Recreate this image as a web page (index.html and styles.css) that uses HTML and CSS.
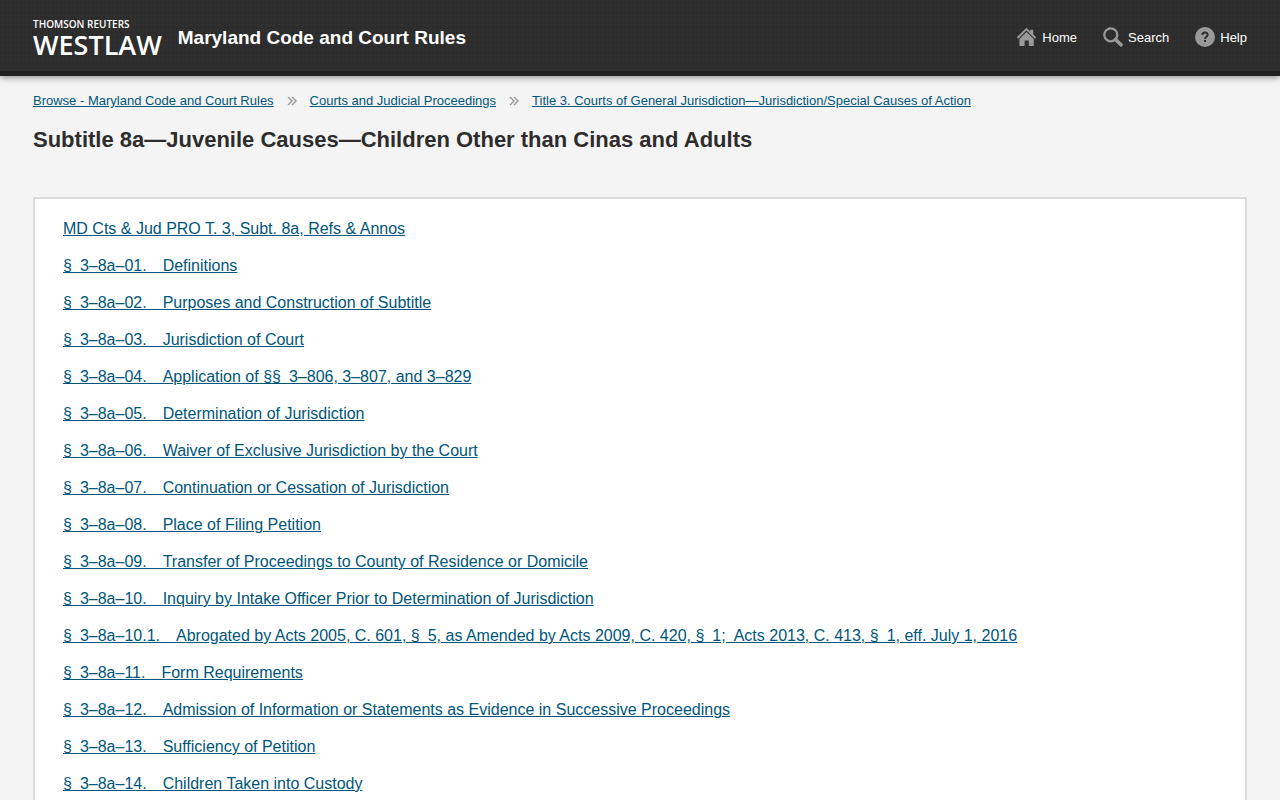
FILE: index.html
```html
<!DOCTYPE html>
<html lang="en">
<head>
    <meta charset="UTF-8">
    <meta name="viewport" content="width=device-width, initial-scale=1.0">
    <title>Maryland Code and Court Rules</title>
    <link rel="stylesheet" href="styles.css">
</head>
<body>
    <header class="header">
        <a class="logo" href="#">
            <span class="logo-company">THOMSON REUTERS</span>
            <span class="logo-product">WESTLAW</span>
        </a>
        <div class="site-title">Maryland Code and Court Rules</div>
        <nav class="tools">
            <a href="#">
                <svg width="20" height="20" viewBox="0 0 20 20" fill="#999">
                    <path d="M9.5 0.8 L13.3 4.4 V2.8 H16.2 V7.2 L19.2 10.3 L17.8 11.7 L9.5 3.6 L1.2 11.7 L-0.2 10.3 Z"/>
                    <path d="M9.5 4.9 L16.8 12 V19 H11.8 V13.5 H7.6 V19 H2.4 V12 Z"/>
                </svg>
                Home
            </a>
            <a href="#">
                <svg width="20" height="20" viewBox="0 0 20 20" fill="none" stroke="#999">
                    <circle cx="7.8" cy="7.8" r="6.5" stroke-width="2.2"/>
                    <path d="M12.5 12.5 L18 17.8" stroke-width="3.6" stroke-linecap="round"/>
                </svg>
                Search
            </a>
            <a href="#">
                <svg width="20" height="20" viewBox="0 0 20 20">
                    <circle cx="10" cy="10" r="10" fill="#999"/>
                    <path d="M7.3 8 C7.3 4.6 12.7 4.6 12.7 7.8 C12.7 9.6 10 9.8 10 12" fill="none" stroke="#2d2d2d" stroke-width="2"/>
                    <rect x="9" y="13" width="2" height="2" fill="#2d2d2d"/>
                </svg>
                Help
            </a>
        </nav>
    </header>

    <main class="content">
        <nav class="breadcrumb">
            <a href="#">Browse - Maryland Code and Court Rules</a>
            <svg width="10" height="10" viewBox="0 0 10 10"><path d="M1 1 L5 5 L1 9 M5 1 L9 5 L5 9"/></svg>
            <a href="#">Courts and Judicial Proceedings</a>
            <svg width="10" height="10" viewBox="0 0 10 10"><path d="M1 1 L5 5 L1 9 M5 1 L9 5 L5 9"/></svg>
            <a href="#">Title 3. Courts of General Jurisdiction—Jurisdiction/Special Causes of Action</a>
        </nav>
        <h1>Subtitle 8a—Juvenile Causes—Children Other than Cinas and Adults</h1>

        <ul class="sections">
            <li><a href="#">MD Cts &amp; Jud PRO T. 3, Subt. 8a, Refs &amp; Annos</a></li>
            <li><a href="#">§&ensp;3–8a–01.&emsp;Definitions</a></li>
            <li><a href="#">§&ensp;3–8a–02.&emsp;Purposes and Construction of Subtitle</a></li>
            <li><a href="#">§&ensp;3–8a–03.&emsp;Jurisdiction of Court</a></li>
            <li><a href="#">§&ensp;3–8a–04.&emsp;Application of §§&ensp;3–806, 3–807, and 3–829</a></li>
            <li><a href="#">§&ensp;3–8a–05.&emsp;Determination of Jurisdiction</a></li>
            <li><a href="#">§&ensp;3–8a–06.&emsp;Waiver of Exclusive Jurisdiction by the Court</a></li>
            <li><a href="#">§&ensp;3–8a–07.&emsp;Continuation or Cessation of Jurisdiction</a></li>
            <li><a href="#">§&ensp;3–8a–08.&emsp;Place of Filing Petition</a></li>
            <li><a href="#">§&ensp;3–8a–09.&emsp;Transfer of Proceedings to County of Residence or Domicile</a></li>
            <li><a href="#">§&ensp;3–8a–10.&emsp;Inquiry by Intake Officer Prior to Determination of Jurisdiction</a></li>
            <li><a href="#">§&ensp;3–8a–10.1.&emsp;Abrogated by Acts 2005, C. 601, §&ensp;5, as Amended by Acts 2009, C. 420, §&ensp;1;&ensp;Acts 2013, C. 413, §&ensp;1, eff. July 1, 2016</a></li>
            <li><a href="#">§&ensp;3–8a–11.&emsp;Form Requirements</a></li>
            <li><a href="#">§&ensp;3–8a–12.&emsp;Admission of Information or Statements as Evidence in Successive Proceedings</a></li>
            <li><a href="#">§&ensp;3–8a–13.&emsp;Sufficiency of Petition</a></li>
            <li><a href="#">§&ensp;3–8a–14.&emsp;Children Taken into Custody</a></li>
        </ul>
    </main>
</body>
</html>
```
FILE: styles.css
```css
body {
    font-family: "Liberation Sans", Arial, sans-serif;
    margin: 0;
    background-color: #f4f4f4;
    color: #2d2d2d;
}
a {
    color: #00567a;
}
.header {
    display: flex;
    align-items: center;
    height: 71px;
    padding: 0 33px;
    border-bottom: 5px solid #212121;
    background-color: #2d2d2d;
    background-image:
        repeating-linear-gradient(0deg, rgba(255, 255, 255, 0.01) 0 2px, transparent 2px 5px),
        repeating-linear-gradient(90deg, rgba(0, 0, 0, 0.04) 0 1px, transparent 1px 4px);
    box-shadow: 0 1px 7px rgba(0, 0, 0, 0.5);
}
.logo {
    display: flex;
    flex-direction: column;
    padding-top: 6px;
    color: #fff;
    font-family: "Open Sans", "Noto Sans", sans-serif;
    text-decoration: none;
}
.logo-company {
    font-size: 10px;
    font-weight: 600;
    line-height: 12px;
}
.logo-product {
    font-size: 27px;
    font-weight: 600;
    line-height: 30px;
}
.site-title {
    margin-left: 16px;
    padding-top: 4px;
    color: #fff;
    font-size: 19px;
    font-weight: bold;
}
.tools {
    display: flex;
    gap: 26px;
    margin-left: auto;
    padding-top: 3px;
}
.tools a {
    display: flex;
    align-items: center;
    gap: 5px;
    color: #fff;
    font-size: 13px;
    text-decoration: none;
}
.content {
    padding: 17px 33px 30px;
}
.breadcrumb {
    display: flex;
    align-items: center;
    gap: 13px;
    font-size: 13px;
    line-height: 16px;
}
.breadcrumb svg {
    fill: none;
    stroke: #999;
    stroke-width: 1.4;
}
h1 {
    margin: 17px 0 44px;
    font-size: 22px;
    line-height: 27px;
}
.sections {
    margin: 0;
    padding: 20px 28px;
    border: 2px solid #dcdcdc;
    background-color: #fff;
    list-style: none;
}
.sections li {
    margin-bottom: 18px;
    font-size: 16px;
    line-height: 19px;
}
```
